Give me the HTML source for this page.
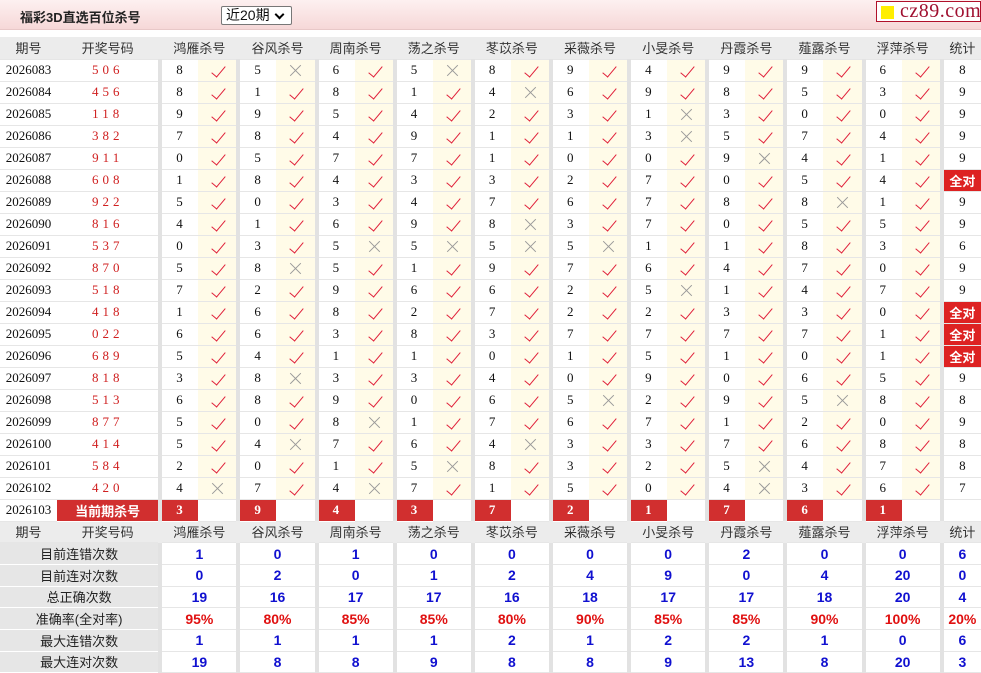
<!DOCTYPE html>
<html><head><meta charset="utf-8">
<style>
*{box-sizing:border-box}
body{margin:0;width:981px;height:673px;overflow:hidden;background:#fff;font-family:"Liberation Sans","Noto Sans CJK SC",sans-serif;}
.top{position:relative;height:30px;background:linear-gradient(#fdf0f0,#f6d8d8);border-bottom:1px solid #e8c8c8}
.top .t{position:absolute;left:20px;top:7px;font-size:13px;font-weight:bold;color:#222}
.top .sel{position:absolute;left:221px;top:6px;width:71px;height:19px;border:1px solid #777;background:#fff;font-size:14px;line-height:17px;padding-left:4px;color:#111;border-radius:2px}
.top .sel:after{content:"";position:absolute;right:8px;top:4px;width:5px;height:5px;border-right:2px solid #000;border-bottom:2px solid #000;transform:rotate(45deg)}
.logo{position:absolute;left:876px;top:1px;width:105px;height:21px;border:1px solid #b0102a;background:#fff;font-family:"Liberation Serif",serif;font-size:20px;color:#a01030;line-height:18px;padding-left:23px;letter-spacing:0.5px}
.logo:before{content:"";position:absolute;left:4px;top:4px;width:13px;height:13px;background:#ffee00}
table{position:absolute;left:0;top:37px;border-collapse:collapse;table-layout:fixed;width:981px}
td{height:22px;padding:0;border-bottom:1px solid #e6e6e6;text-align:center;font-family:"Liberation Serif","Noto Sans CJK SC",serif;font-size:13px;color:#111;position:relative;white-space:nowrap;overflow:hidden}
tr.h td{background:#ececec;font-family:"Liberation Sans","Noto Sans CJK SC",sans-serif;color:#333;font-size:13px}
td.s{background:#e2e2e2;border-bottom:none}
td.p{background:#fff}
td.d{color:#d02020;letter-spacing:4px}
td.n{text-align:left;padding-left:14px}
td.K,td.X{background:#fffbe8}
td.K:after{content:"";position:absolute;left:17px;top:3px;width:6px;height:13px;border-right:1.5px solid #e0203a;border-bottom:1.5px solid #e0203a;transform:rotate(40deg)}
td.X:before,td.X:after{content:"";position:absolute;left:12px;top:10px;width:15px;height:1px;background:#999;transform:rotate(45deg)}
td.X:after{transform:rotate(-45deg)}
td.q{color:#fff;background:#d22;font-weight:bold;font-family:"Liberation Sans","Noto Sans CJK SC",sans-serif}
td.cur{background:#d12f2f;color:#fff;font-weight:bold;font-family:"Liberation Sans","Noto Sans CJK SC",sans-serif;border-bottom:1px solid #fff}
td.r{background:#d12f2f;color:#fff;font-weight:bold;text-align:left;padding-left:14px;border-bottom:1px solid #fff}
td.w{background:#fff}
td.L{background:#e6e6e6;font-family:"Liberation Sans","Noto Sans CJK SC",sans-serif;color:#222;border-bottom:1px solid #fff}
td.v{font-family:"Liberation Sans",sans-serif;font-weight:bold;color:#1010d0;font-size:14px}
td.v2{font-family:"Liberation Sans",sans-serif;font-weight:bold;color:#e01010;font-size:14px}
tr.st td{height:21.7px}
</style></head><body>
<div class="top"><div class="t">福彩3D直选百位杀号</div><div class="sel">近20期</div></div>
<div class="logo">cz89.com</div>
<table>
<colgroup><col style="width:57px"><col style="width:101px"><col style="width:4px"><col style="width:36px"><col style="width:38px"><col style="width:4px"><col style="width:36px"><col style="width:38px"><col style="width:4px"><col style="width:36px"><col style="width:38px"><col style="width:4px"><col style="width:36px"><col style="width:38px"><col style="width:4px"><col style="width:36px"><col style="width:38px"><col style="width:4px"><col style="width:36px"><col style="width:38px"><col style="width:4px"><col style="width:36px"><col style="width:38px"><col style="width:4px"><col style="width:36px"><col style="width:38px"><col style="width:4px"><col style="width:36px"><col style="width:38px"><col style="width:4px"><col style="width:36px"><col style="width:38px"><col style="width:4px"><col style="width:37px"></colgroup>
<tr class="h"><td>期号</td><td>开奖号码</td><td class="s"></td><td colspan="2">鸿雁杀号</td><td class="s"></td><td colspan="2">谷风杀号</td><td class="s"></td><td colspan="2">周南杀号</td><td class="s"></td><td colspan="2">荡之杀号</td><td class="s"></td><td colspan="2">苳苡杀号</td><td class="s"></td><td colspan="2">采薇杀号</td><td class="s"></td><td colspan="2">小旻杀号</td><td class="s"></td><td colspan="2">丹霞杀号</td><td class="s"></td><td colspan="2">薤露杀号</td><td class="s"></td><td colspan="2">浮萍杀号</td><td class="s"></td><td>统计</td></tr>
<tr><td class="p">2026083</td><td class="d">506</td><td class="s"></td><td class="n">8</td><td class="K"></td><td class="s"></td><td class="n">5</td><td class="X"></td><td class="s"></td><td class="n">6</td><td class="K"></td><td class="s"></td><td class="n">5</td><td class="X"></td><td class="s"></td><td class="n">8</td><td class="K"></td><td class="s"></td><td class="n">9</td><td class="K"></td><td class="s"></td><td class="n">4</td><td class="K"></td><td class="s"></td><td class="n">9</td><td class="K"></td><td class="s"></td><td class="n">9</td><td class="K"></td><td class="s"></td><td class="n">6</td><td class="K"></td><td class="s"></td><td>8</td></tr>
<tr><td class="p">2026084</td><td class="d">456</td><td class="s"></td><td class="n">8</td><td class="K"></td><td class="s"></td><td class="n">1</td><td class="K"></td><td class="s"></td><td class="n">8</td><td class="K"></td><td class="s"></td><td class="n">1</td><td class="K"></td><td class="s"></td><td class="n">4</td><td class="X"></td><td class="s"></td><td class="n">6</td><td class="K"></td><td class="s"></td><td class="n">9</td><td class="K"></td><td class="s"></td><td class="n">8</td><td class="K"></td><td class="s"></td><td class="n">5</td><td class="K"></td><td class="s"></td><td class="n">3</td><td class="K"></td><td class="s"></td><td>9</td></tr>
<tr><td class="p">2026085</td><td class="d">118</td><td class="s"></td><td class="n">9</td><td class="K"></td><td class="s"></td><td class="n">9</td><td class="K"></td><td class="s"></td><td class="n">5</td><td class="K"></td><td class="s"></td><td class="n">4</td><td class="K"></td><td class="s"></td><td class="n">2</td><td class="K"></td><td class="s"></td><td class="n">3</td><td class="K"></td><td class="s"></td><td class="n">1</td><td class="X"></td><td class="s"></td><td class="n">3</td><td class="K"></td><td class="s"></td><td class="n">0</td><td class="K"></td><td class="s"></td><td class="n">0</td><td class="K"></td><td class="s"></td><td>9</td></tr>
<tr><td class="p">2026086</td><td class="d">382</td><td class="s"></td><td class="n">7</td><td class="K"></td><td class="s"></td><td class="n">8</td><td class="K"></td><td class="s"></td><td class="n">4</td><td class="K"></td><td class="s"></td><td class="n">9</td><td class="K"></td><td class="s"></td><td class="n">1</td><td class="K"></td><td class="s"></td><td class="n">1</td><td class="K"></td><td class="s"></td><td class="n">3</td><td class="X"></td><td class="s"></td><td class="n">5</td><td class="K"></td><td class="s"></td><td class="n">7</td><td class="K"></td><td class="s"></td><td class="n">4</td><td class="K"></td><td class="s"></td><td>9</td></tr>
<tr><td class="p">2026087</td><td class="d">911</td><td class="s"></td><td class="n">0</td><td class="K"></td><td class="s"></td><td class="n">5</td><td class="K"></td><td class="s"></td><td class="n">7</td><td class="K"></td><td class="s"></td><td class="n">7</td><td class="K"></td><td class="s"></td><td class="n">1</td><td class="K"></td><td class="s"></td><td class="n">0</td><td class="K"></td><td class="s"></td><td class="n">0</td><td class="K"></td><td class="s"></td><td class="n">9</td><td class="X"></td><td class="s"></td><td class="n">4</td><td class="K"></td><td class="s"></td><td class="n">1</td><td class="K"></td><td class="s"></td><td>9</td></tr>
<tr><td class="p">2026088</td><td class="d">608</td><td class="s"></td><td class="n">1</td><td class="K"></td><td class="s"></td><td class="n">8</td><td class="K"></td><td class="s"></td><td class="n">4</td><td class="K"></td><td class="s"></td><td class="n">3</td><td class="K"></td><td class="s"></td><td class="n">3</td><td class="K"></td><td class="s"></td><td class="n">2</td><td class="K"></td><td class="s"></td><td class="n">7</td><td class="K"></td><td class="s"></td><td class="n">0</td><td class="K"></td><td class="s"></td><td class="n">5</td><td class="K"></td><td class="s"></td><td class="n">4</td><td class="K"></td><td class="s"></td><td class="q">全对</td></tr>
<tr><td class="p">2026089</td><td class="d">922</td><td class="s"></td><td class="n">5</td><td class="K"></td><td class="s"></td><td class="n">0</td><td class="K"></td><td class="s"></td><td class="n">3</td><td class="K"></td><td class="s"></td><td class="n">4</td><td class="K"></td><td class="s"></td><td class="n">7</td><td class="K"></td><td class="s"></td><td class="n">6</td><td class="K"></td><td class="s"></td><td class="n">7</td><td class="K"></td><td class="s"></td><td class="n">8</td><td class="K"></td><td class="s"></td><td class="n">8</td><td class="X"></td><td class="s"></td><td class="n">1</td><td class="K"></td><td class="s"></td><td>9</td></tr>
<tr><td class="p">2026090</td><td class="d">816</td><td class="s"></td><td class="n">4</td><td class="K"></td><td class="s"></td><td class="n">1</td><td class="K"></td><td class="s"></td><td class="n">6</td><td class="K"></td><td class="s"></td><td class="n">9</td><td class="K"></td><td class="s"></td><td class="n">8</td><td class="X"></td><td class="s"></td><td class="n">3</td><td class="K"></td><td class="s"></td><td class="n">7</td><td class="K"></td><td class="s"></td><td class="n">0</td><td class="K"></td><td class="s"></td><td class="n">5</td><td class="K"></td><td class="s"></td><td class="n">5</td><td class="K"></td><td class="s"></td><td>9</td></tr>
<tr><td class="p">2026091</td><td class="d">537</td><td class="s"></td><td class="n">0</td><td class="K"></td><td class="s"></td><td class="n">3</td><td class="K"></td><td class="s"></td><td class="n">5</td><td class="X"></td><td class="s"></td><td class="n">5</td><td class="X"></td><td class="s"></td><td class="n">5</td><td class="X"></td><td class="s"></td><td class="n">5</td><td class="X"></td><td class="s"></td><td class="n">1</td><td class="K"></td><td class="s"></td><td class="n">1</td><td class="K"></td><td class="s"></td><td class="n">8</td><td class="K"></td><td class="s"></td><td class="n">3</td><td class="K"></td><td class="s"></td><td>6</td></tr>
<tr><td class="p">2026092</td><td class="d">870</td><td class="s"></td><td class="n">5</td><td class="K"></td><td class="s"></td><td class="n">8</td><td class="X"></td><td class="s"></td><td class="n">5</td><td class="K"></td><td class="s"></td><td class="n">1</td><td class="K"></td><td class="s"></td><td class="n">9</td><td class="K"></td><td class="s"></td><td class="n">7</td><td class="K"></td><td class="s"></td><td class="n">6</td><td class="K"></td><td class="s"></td><td class="n">4</td><td class="K"></td><td class="s"></td><td class="n">7</td><td class="K"></td><td class="s"></td><td class="n">0</td><td class="K"></td><td class="s"></td><td>9</td></tr>
<tr><td class="p">2026093</td><td class="d">518</td><td class="s"></td><td class="n">7</td><td class="K"></td><td class="s"></td><td class="n">2</td><td class="K"></td><td class="s"></td><td class="n">9</td><td class="K"></td><td class="s"></td><td class="n">6</td><td class="K"></td><td class="s"></td><td class="n">6</td><td class="K"></td><td class="s"></td><td class="n">2</td><td class="K"></td><td class="s"></td><td class="n">5</td><td class="X"></td><td class="s"></td><td class="n">1</td><td class="K"></td><td class="s"></td><td class="n">4</td><td class="K"></td><td class="s"></td><td class="n">7</td><td class="K"></td><td class="s"></td><td>9</td></tr>
<tr><td class="p">2026094</td><td class="d">418</td><td class="s"></td><td class="n">1</td><td class="K"></td><td class="s"></td><td class="n">6</td><td class="K"></td><td class="s"></td><td class="n">8</td><td class="K"></td><td class="s"></td><td class="n">2</td><td class="K"></td><td class="s"></td><td class="n">7</td><td class="K"></td><td class="s"></td><td class="n">2</td><td class="K"></td><td class="s"></td><td class="n">2</td><td class="K"></td><td class="s"></td><td class="n">3</td><td class="K"></td><td class="s"></td><td class="n">3</td><td class="K"></td><td class="s"></td><td class="n">0</td><td class="K"></td><td class="s"></td><td class="q">全对</td></tr>
<tr><td class="p">2026095</td><td class="d">022</td><td class="s"></td><td class="n">6</td><td class="K"></td><td class="s"></td><td class="n">6</td><td class="K"></td><td class="s"></td><td class="n">3</td><td class="K"></td><td class="s"></td><td class="n">8</td><td class="K"></td><td class="s"></td><td class="n">3</td><td class="K"></td><td class="s"></td><td class="n">7</td><td class="K"></td><td class="s"></td><td class="n">7</td><td class="K"></td><td class="s"></td><td class="n">7</td><td class="K"></td><td class="s"></td><td class="n">7</td><td class="K"></td><td class="s"></td><td class="n">1</td><td class="K"></td><td class="s"></td><td class="q">全对</td></tr>
<tr><td class="p">2026096</td><td class="d">689</td><td class="s"></td><td class="n">5</td><td class="K"></td><td class="s"></td><td class="n">4</td><td class="K"></td><td class="s"></td><td class="n">1</td><td class="K"></td><td class="s"></td><td class="n">1</td><td class="K"></td><td class="s"></td><td class="n">0</td><td class="K"></td><td class="s"></td><td class="n">1</td><td class="K"></td><td class="s"></td><td class="n">5</td><td class="K"></td><td class="s"></td><td class="n">1</td><td class="K"></td><td class="s"></td><td class="n">0</td><td class="K"></td><td class="s"></td><td class="n">1</td><td class="K"></td><td class="s"></td><td class="q">全对</td></tr>
<tr><td class="p">2026097</td><td class="d">818</td><td class="s"></td><td class="n">3</td><td class="K"></td><td class="s"></td><td class="n">8</td><td class="X"></td><td class="s"></td><td class="n">3</td><td class="K"></td><td class="s"></td><td class="n">3</td><td class="K"></td><td class="s"></td><td class="n">4</td><td class="K"></td><td class="s"></td><td class="n">0</td><td class="K"></td><td class="s"></td><td class="n">9</td><td class="K"></td><td class="s"></td><td class="n">0</td><td class="K"></td><td class="s"></td><td class="n">6</td><td class="K"></td><td class="s"></td><td class="n">5</td><td class="K"></td><td class="s"></td><td>9</td></tr>
<tr><td class="p">2026098</td><td class="d">513</td><td class="s"></td><td class="n">6</td><td class="K"></td><td class="s"></td><td class="n">8</td><td class="K"></td><td class="s"></td><td class="n">9</td><td class="K"></td><td class="s"></td><td class="n">0</td><td class="K"></td><td class="s"></td><td class="n">6</td><td class="K"></td><td class="s"></td><td class="n">5</td><td class="X"></td><td class="s"></td><td class="n">2</td><td class="K"></td><td class="s"></td><td class="n">9</td><td class="K"></td><td class="s"></td><td class="n">5</td><td class="X"></td><td class="s"></td><td class="n">8</td><td class="K"></td><td class="s"></td><td>8</td></tr>
<tr><td class="p">2026099</td><td class="d">877</td><td class="s"></td><td class="n">5</td><td class="K"></td><td class="s"></td><td class="n">0</td><td class="K"></td><td class="s"></td><td class="n">8</td><td class="X"></td><td class="s"></td><td class="n">1</td><td class="K"></td><td class="s"></td><td class="n">7</td><td class="K"></td><td class="s"></td><td class="n">6</td><td class="K"></td><td class="s"></td><td class="n">7</td><td class="K"></td><td class="s"></td><td class="n">1</td><td class="K"></td><td class="s"></td><td class="n">2</td><td class="K"></td><td class="s"></td><td class="n">0</td><td class="K"></td><td class="s"></td><td>9</td></tr>
<tr><td class="p">2026100</td><td class="d">414</td><td class="s"></td><td class="n">5</td><td class="K"></td><td class="s"></td><td class="n">4</td><td class="X"></td><td class="s"></td><td class="n">7</td><td class="K"></td><td class="s"></td><td class="n">6</td><td class="K"></td><td class="s"></td><td class="n">4</td><td class="X"></td><td class="s"></td><td class="n">3</td><td class="K"></td><td class="s"></td><td class="n">3</td><td class="K"></td><td class="s"></td><td class="n">7</td><td class="K"></td><td class="s"></td><td class="n">6</td><td class="K"></td><td class="s"></td><td class="n">8</td><td class="K"></td><td class="s"></td><td>8</td></tr>
<tr><td class="p">2026101</td><td class="d">584</td><td class="s"></td><td class="n">2</td><td class="K"></td><td class="s"></td><td class="n">0</td><td class="K"></td><td class="s"></td><td class="n">1</td><td class="K"></td><td class="s"></td><td class="n">5</td><td class="X"></td><td class="s"></td><td class="n">8</td><td class="K"></td><td class="s"></td><td class="n">3</td><td class="K"></td><td class="s"></td><td class="n">2</td><td class="K"></td><td class="s"></td><td class="n">5</td><td class="X"></td><td class="s"></td><td class="n">4</td><td class="K"></td><td class="s"></td><td class="n">7</td><td class="K"></td><td class="s"></td><td>8</td></tr>
<tr><td class="p">2026102</td><td class="d">420</td><td class="s"></td><td class="n">4</td><td class="X"></td><td class="s"></td><td class="n">7</td><td class="K"></td><td class="s"></td><td class="n">4</td><td class="X"></td><td class="s"></td><td class="n">7</td><td class="K"></td><td class="s"></td><td class="n">1</td><td class="K"></td><td class="s"></td><td class="n">5</td><td class="K"></td><td class="s"></td><td class="n">0</td><td class="K"></td><td class="s"></td><td class="n">4</td><td class="X"></td><td class="s"></td><td class="n">3</td><td class="K"></td><td class="s"></td><td class="n">6</td><td class="K"></td><td class="s"></td><td>7</td></tr>
<tr><td class="p">2026103</td><td class="cur">当前期杀号</td><td class="s"></td><td class="r">3</td><td class="w"></td><td class="s"></td><td class="r">9</td><td class="w"></td><td class="s"></td><td class="r">4</td><td class="w"></td><td class="s"></td><td class="r">3</td><td class="w"></td><td class="s"></td><td class="r">7</td><td class="w"></td><td class="s"></td><td class="r">2</td><td class="w"></td><td class="s"></td><td class="r">1</td><td class="w"></td><td class="s"></td><td class="r">7</td><td class="w"></td><td class="s"></td><td class="r">6</td><td class="w"></td><td class="s"></td><td class="r">1</td><td class="w"></td><td class="s"></td><td></td></tr>
<tr class="h st"><td>期号</td><td>开奖号码</td><td class="s"></td><td colspan="2">鸿雁杀号</td><td class="s"></td><td colspan="2">谷风杀号</td><td class="s"></td><td colspan="2">周南杀号</td><td class="s"></td><td colspan="2">荡之杀号</td><td class="s"></td><td colspan="2">苳苡杀号</td><td class="s"></td><td colspan="2">采薇杀号</td><td class="s"></td><td colspan="2">小旻杀号</td><td class="s"></td><td colspan="2">丹霞杀号</td><td class="s"></td><td colspan="2">薤露杀号</td><td class="s"></td><td colspan="2">浮萍杀号</td><td class="s"></td><td>统计</td></tr>
<tr class="st"><td class="L" colspan="2">目前连错次数</td><td class="s"></td><td class="v" colspan="2">1</td><td class="s"></td><td class="v" colspan="2">0</td><td class="s"></td><td class="v" colspan="2">1</td><td class="s"></td><td class="v" colspan="2">0</td><td class="s"></td><td class="v" colspan="2">0</td><td class="s"></td><td class="v" colspan="2">0</td><td class="s"></td><td class="v" colspan="2">0</td><td class="s"></td><td class="v" colspan="2">2</td><td class="s"></td><td class="v" colspan="2">0</td><td class="s"></td><td class="v" colspan="2">0</td><td class="s"></td><td class="v">6</td></tr>
<tr class="st"><td class="L" colspan="2">目前连对次数</td><td class="s"></td><td class="v" colspan="2">0</td><td class="s"></td><td class="v" colspan="2">2</td><td class="s"></td><td class="v" colspan="2">0</td><td class="s"></td><td class="v" colspan="2">1</td><td class="s"></td><td class="v" colspan="2">2</td><td class="s"></td><td class="v" colspan="2">4</td><td class="s"></td><td class="v" colspan="2">9</td><td class="s"></td><td class="v" colspan="2">0</td><td class="s"></td><td class="v" colspan="2">4</td><td class="s"></td><td class="v" colspan="2">20</td><td class="s"></td><td class="v">0</td></tr>
<tr class="st"><td class="L" colspan="2">总正确次数</td><td class="s"></td><td class="v" colspan="2">19</td><td class="s"></td><td class="v" colspan="2">16</td><td class="s"></td><td class="v" colspan="2">17</td><td class="s"></td><td class="v" colspan="2">17</td><td class="s"></td><td class="v" colspan="2">16</td><td class="s"></td><td class="v" colspan="2">18</td><td class="s"></td><td class="v" colspan="2">17</td><td class="s"></td><td class="v" colspan="2">17</td><td class="s"></td><td class="v" colspan="2">18</td><td class="s"></td><td class="v" colspan="2">20</td><td class="s"></td><td class="v">4</td></tr>
<tr class="st"><td class="L" colspan="2">准确率(全对率)</td><td class="s"></td><td class="v2" colspan="2">95%</td><td class="s"></td><td class="v2" colspan="2">80%</td><td class="s"></td><td class="v2" colspan="2">85%</td><td class="s"></td><td class="v2" colspan="2">85%</td><td class="s"></td><td class="v2" colspan="2">80%</td><td class="s"></td><td class="v2" colspan="2">90%</td><td class="s"></td><td class="v2" colspan="2">85%</td><td class="s"></td><td class="v2" colspan="2">85%</td><td class="s"></td><td class="v2" colspan="2">90%</td><td class="s"></td><td class="v2" colspan="2">100%</td><td class="s"></td><td class="v2">20%</td></tr>
<tr class="st"><td class="L" colspan="2">最大连错次数</td><td class="s"></td><td class="v" colspan="2">1</td><td class="s"></td><td class="v" colspan="2">1</td><td class="s"></td><td class="v" colspan="2">1</td><td class="s"></td><td class="v" colspan="2">1</td><td class="s"></td><td class="v" colspan="2">2</td><td class="s"></td><td class="v" colspan="2">1</td><td class="s"></td><td class="v" colspan="2">2</td><td class="s"></td><td class="v" colspan="2">2</td><td class="s"></td><td class="v" colspan="2">1</td><td class="s"></td><td class="v" colspan="2">0</td><td class="s"></td><td class="v">6</td></tr>
<tr class="st"><td class="L" colspan="2">最大连对次数</td><td class="s"></td><td class="v" colspan="2">19</td><td class="s"></td><td class="v" colspan="2">8</td><td class="s"></td><td class="v" colspan="2">8</td><td class="s"></td><td class="v" colspan="2">9</td><td class="s"></td><td class="v" colspan="2">8</td><td class="s"></td><td class="v" colspan="2">8</td><td class="s"></td><td class="v" colspan="2">9</td><td class="s"></td><td class="v" colspan="2">13</td><td class="s"></td><td class="v" colspan="2">8</td><td class="s"></td><td class="v" colspan="2">20</td><td class="s"></td><td class="v">3</td></tr>
</table>
</body></html>
